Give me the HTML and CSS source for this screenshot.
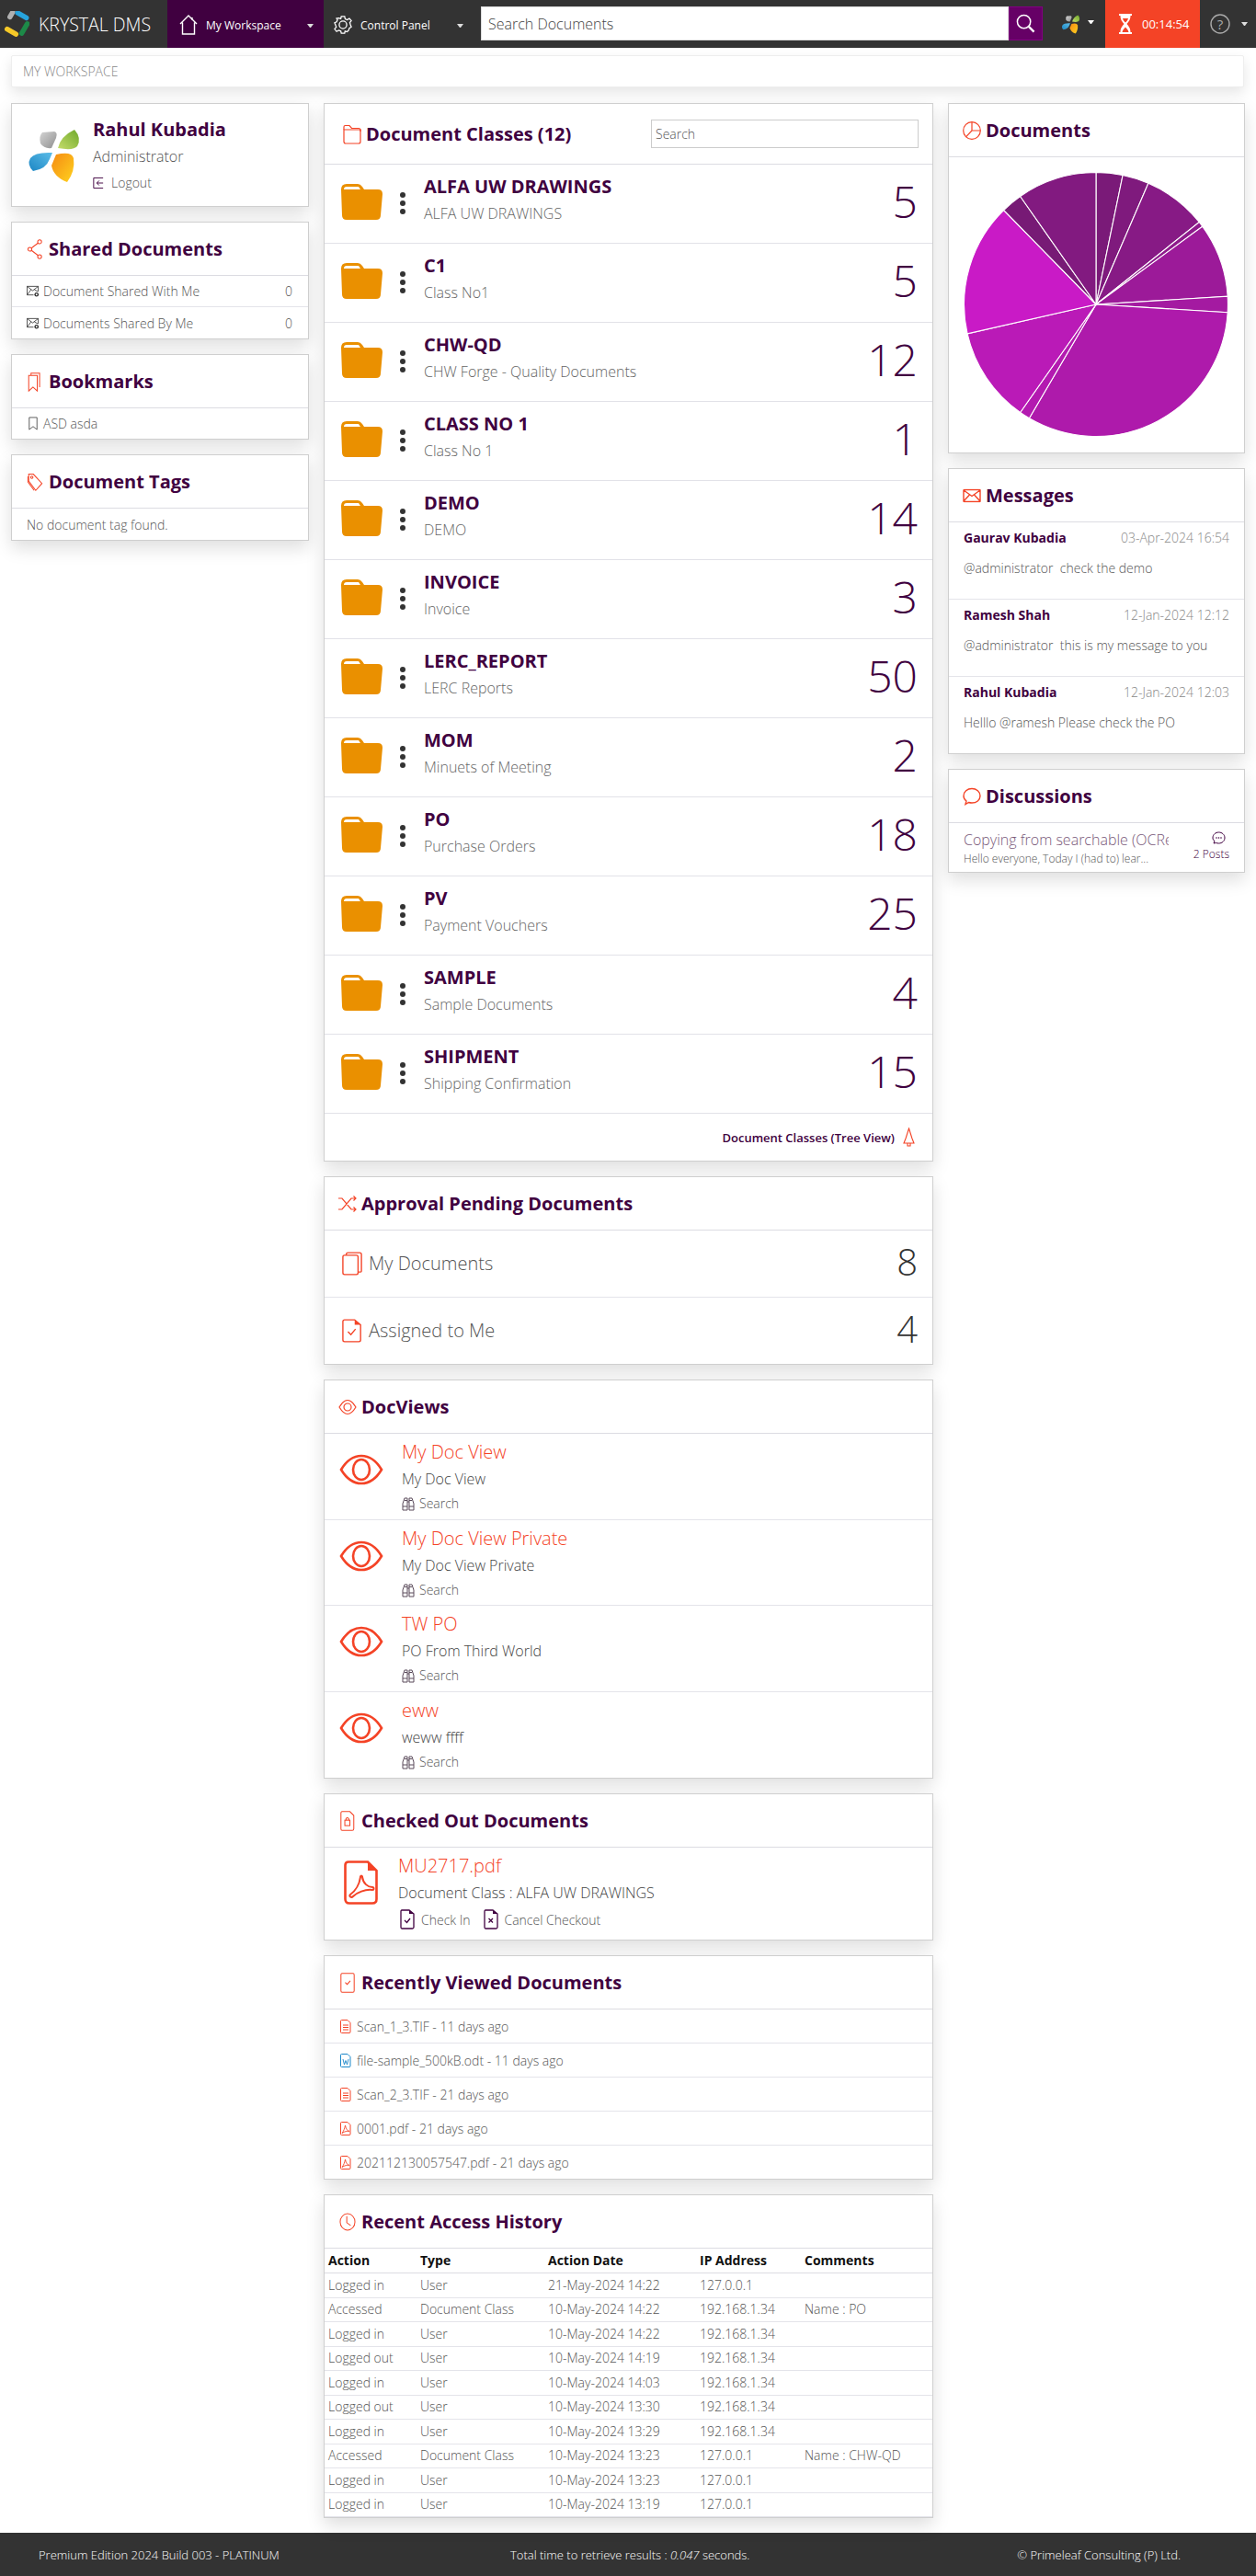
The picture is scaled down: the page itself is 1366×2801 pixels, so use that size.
FILE: index.html
```html
<!DOCTYPE html>
<html lang="en">
<head>
  <meta charset="UTF-8" />
  <title>KRYSTAL DMS - My Workspace</title>
  <link rel="stylesheet" href="styles.css">
</head>
<body>

  <!-- icon sprite -->
  <svg class="sprite" aria-hidden="true">
    <defs>
      <linearGradient id="petal-grey" x1="0" y1="0" x2="1" y2="1"><stop offset="0" stop-color="#d4d4d4"/><stop offset="1" stop-color="#8f8f8f"/></linearGradient>
      <linearGradient id="petal-green" x1="1" y1="0" x2="0" y2="1"><stop offset="0" stop-color="#6fa92c"/><stop offset="1" stop-color="#c5dc6a"/></linearGradient>
      <linearGradient id="petal-blue" x1="1" y1="0" x2="0" y2="1"><stop offset="0" stop-color="#5cbde8"/><stop offset="1" stop-color="#1c86c4"/></linearGradient>
      <linearGradient id="petal-orange" x1="0" y1="0" x2="1" y2="1"><stop offset="0" stop-color="#f58a12"/><stop offset="1" stop-color="#ffd21f"/></linearGradient>
    </defs>
    <symbol id="i-petals" viewBox="0 0 68 64">
      <path fill="url(#petal-grey)" d="M20 8 33 7Q37 8 35 14L30 25Q22 26 18 20 16 12 20 8Z"/>
      <path fill="url(#petal-green)" d="M37 25Q40 12 55 5 63 14 58 23 54 28 37 25Z"/>
      <path fill="url(#petal-blue)" d="M31 30 28 37Q24 48 10 50 3 43 7 36 12 29 31 30Z"/>
      <path fill="url(#petal-orange)" d="M35 32Q52 28 54 36 56 50 47 62 32 56 30 44Z"/>
    </symbol>
    <symbol id="i-folder" viewBox="0 0 46 39">
      <path fill="#ea9000" d="M1 6Q1 0 7 0H19Q22 0 24 3L26 6H41Q46 6 46 11L44 34Q44 39 39 39H7Q2 39 2 34Z"/>
      <path fill="#fff" d="M4 6Q4 3 7 3H20L22 6Z"/>
    </symbol>
    <symbol id="i-eye" viewBox="0 0 48 34">
      <path fill="none" stroke="#f44326" stroke-width="2.6" d="M2 17C8 7 15 2 24 2S40 7 46 17C40 27 33 32 24 32S8 27 2 17Z"/>
      <ellipse cx="24" cy="17" rx="9" ry="11" fill="none" stroke="#f44326" stroke-width="2.6"/>
    </symbol>
    <symbol id="i-binoculars" viewBox="0 0 14 16">
      <path fill="none" stroke="#5a4a5a" stroke-width="1" d="M1 15V8L3 2H6V15ZM13 15V8L11 2H8V15ZM1 11H6M8 11H13M6 6H8M3 4.500H6M8 4.500H11"/>
    </symbol>
    <symbol id="i-sheet" viewBox="0 0 12 15">
      <path fill="none" stroke="#f44326" stroke-width="1" d="M1.500.500H8L11 3.500V13.500Q11 14.500 10 14.500H1.500Q.500 14.500.500 13.500V1.500Q.500.500 1.500.500Z"/>
      <path fill="none" stroke="#f44326" stroke-width="1" d="M3 6H9M3 8.500H9M3 11H9"/>
    </symbol>
    <symbol id="i-word" viewBox="0 0 12 15">
      <path fill="none" stroke="#1b87c9" stroke-width="1" d="M1.500.500H8L11 3.500V13.500Q11 14.500 10 14.500H1.500Q.500 14.500.500 13.500V1.500Q.500.500 1.500.500Z"/>
      <path fill="none" stroke="#1b87c9" stroke-width=".9" d="M3 6 4.500 12 6 7.500 7.500 12 9 6"/>
    </symbol>
    <symbol id="i-pdf" viewBox="0 0 12 15">
      <path fill="none" stroke="#f44326" stroke-width="1" d="M1.500.500H8L11 3.500V13.500Q11 14.500 10 14.500H1.500Q.500 14.500.500 13.500V1.500Q.500.500 1.500.500Z"/>
      <path fill="none" stroke="#f44326" stroke-width=".9" d="M5.500 4C4.800 7 4 10 2 12.500M5.500 4C6 7 7.500 10 10 10.500 8 9.800 5 10.500 2 12.500"/>
    </symbol>
    <symbol id="i-mail" viewBox="0 0 20 15">
      <path fill="none" stroke="#f44326" stroke-width="1.400" d="M1.500 1H18.500Q19 1 19 1.500V13.500Q19 14 18.500 14H1.500Q1 14 1 13.500V1.500Q1 1 1.500 1ZM1 1.500 10 8 19 1.500M1 13.500 7.500 6.500M19 13.500 12.500 6.500"/>
    </symbol>
    <symbol id="i-mail-key" viewBox="0 0 15 15">
      <path fill="none" stroke="#333" stroke-width=".9" d="M.500 2H13.500V8M8 12H.500V2L7 7 13.500 2M.500 12 5 6M13 8 9 6"/>
      <circle cx="11.500" cy="11.500" r="2.500" fill="#333"/><circle cx="11.500" cy="11.500" r="1" fill="#fff"/>
    </symbol>
    <symbol id="i-doc-check" viewBox="0 0 16 22">
      <path fill="none" stroke="#400040" stroke-width="1.300" d="M2 1H10L15 5V19.500Q15 21 13.500 21H2Q1 21 1 19.500V2.500Q1 1 2 1Z"/>
      <path fill="#400040" d="M10 1 15 5H10Z"/>
      <path fill="none" stroke="#400040" stroke-width="1.300" d="M5 12 7.500 14.500 11 10"/>
    </symbol>
    <symbol id="i-doc-cross" viewBox="0 0 16 22">
      <path fill="none" stroke="#400040" stroke-width="1.300" d="M2 1H10L15 5V19.500Q15 21 13.500 21H2Q1 21 1 19.500V2.500Q1 1 2 1Z"/>
      <path fill="#400040" d="M10 1 15 5H10Z"/>
      <path fill="none" stroke="#400040" stroke-width="1.300" d="M5.500 10 10 14.500M10 10 5.500 14.500"/>
    </symbol>
  </svg>

  <!-- Top bar -->
  <header class="topbar">
    <div class="brand">
      <svg class="brand-logo" viewBox="0 0 28 28">
        <g transform="rotate(30 14 14)" fill="none" stroke-width="5.500" stroke-linecap="round">
          <path stroke="#b0b0b0" d="M4 11V5"/>
          <path stroke="#27a3dc" d="M9 3H20"/>
          <path stroke="#1d8a48" d="M24 8V20"/>
          <path stroke="#f6c928" d="M8 24H19"/>
        </g>
      </svg>
      <span>KRYSTAL DMS</span>
    </div>
    <a class="nav-item nav-active">
      <svg class="nav-icon" viewBox="0 0 20 22"><path fill="none" stroke="#fff" stroke-width="1.400" d="M1 10 10 1 19 10M3.500 8.500V21H16.500V8.500M14 3V6"/></svg>
      <span class="nav-label">My Workspace</span><span class="caret"></span>
    </a>
    <a class="nav-item nav-control">
      <svg class="nav-icon" viewBox="0 0 22 22"><path fill="none" stroke="#fff" stroke-width="1.400" d="M9 1H13L13.600 4 16 5 18.600 3.400 21 6 19.200 8.400 20 11 21 13.500 18.600 15 17.800 17.500 16 19.300 13.500 18.500 13 21H9L8.400 18.500 6 17.500 3.400 19 1 16 3 13.500 2 11 1 8.500 3.400 7.500 4.400 5 3.400 3.400 6 3 8.400 3.800Z"/><circle cx="11" cy="11" r="4.500" fill="none" stroke="#fff" stroke-width="1.400"/></svg>
      <span class="nav-label">Control Panel</span><span class="caret"></span>
    </a>
    <div class="top-search">
      <input class="top-search-input" type="text" placeholder="Search Documents" />
      <button class="top-search-btn" type="button">
        <svg viewBox="0 0 22 22" width="21" height="21"><circle cx="9" cy="9" r="7.500" fill="none" stroke="#fff" stroke-width="1.600"/><path stroke="#fff" stroke-width="2.400" d="M14.500 14.500 20.500 20.500"/></svg>
      </button>
    </div>
    <div class="top-user">
      <svg class="top-petals"><use href="#i-petals"/></svg><span class="caret caret-raised"></span>
    </div>
    <div class="timer">
      <svg viewBox="0 0 16 24" width="16" height="24"><path fill="#fff" d="M1 1H15V3H13.500C13.500 8 11 10 9.500 12 11 14 13.500 16 13.500 21H15V23H1V21H2.500C2.500 16 5 14 6.500 12 5 10 2.500 8 2.500 3H1ZM5 6H11C10.500 8 9 9.500 8 10.500 7 9.500 5.500 8 5 6ZM4.500 21H11.500C11 18.500 9.500 17 8 15.500 6.500 17 5 18.500 4.500 21Z" fill-rule="evenodd"/></svg>
      <span>00:14:54</span>
    </div>
    <div class="top-help">
      <svg viewBox="0 0 22 22" width="22" height="22"><circle cx="11" cy="11" r="10" fill="none" stroke="#aaa" stroke-width="1.400"/><text x="11" y="16.500" text-anchor="middle" class="help-mark">?</text></svg>
      <span class="caret"></span>
    </div>
  </header>

  <div class="crumb">MY WORKSPACE</div>

  <main class="columns">

    <!-- Left column -->
    <section class="col-left">
      <div class="card user-card">
        <svg class="user-logo"><use href="#i-petals"/></svg>
        <div class="user-info">
          <div class="user-name">Rahul Kubadia</div>
          <div class="user-role">Administrator</div>
          <a class="user-logout">
            <svg viewBox="0 0 14 15" width="12" height="14"><path fill="none" stroke="#400040" stroke-width="1.100" d="M13 1H1V14H13M13 7.500H5M8 4.500 5 7.500 8 10.500"/></svg>
            Logout
          </a>
        </div>
      </div>

      <div class="card">
        <h2 class="card-head">
          <svg class="head-icon" viewBox="0 0 20 26"><g fill="none" stroke="#f44326" stroke-width="1.200"><circle cx="3.500" cy="13" r="2.500"/><circle cx="16" cy="3.500" r="2.500"/><circle cx="16" cy="22.500" r="2.500"/><path d="M5.500 11.500 14 5M5.500 14.500 14 21"/></g></svg>
          Shared Documents
        </h2>
        <div class="list-row"><svg class="row-icon"><use href="#i-mail-key"/></svg><span class="row-text">Document Shared With Me</span><span class="row-count">0</span></div>
        <div class="list-row"><svg class="row-icon"><use href="#i-mail-key"/></svg><span class="row-text">Documents Shared By Me</span><span class="row-count">0</span></div>
      </div>

      <div class="card">
        <h2 class="card-head">
          <svg class="head-icon" viewBox="0 0 20 26"><path fill="none" stroke="#f44326" stroke-width="1.200" d="M2 5H13V25L7.500 20 2 25ZM5 5V2H16V20"/></svg>
          Bookmarks
        </h2>
        <div class="list-row row-short"><svg class="row-icon" viewBox="0 0 12 16"><path fill="none" stroke="#555" d="M1.500 1H10.500V15L6 11.500 1.500 15Z"/></svg><span class="row-text">ASD asda</span></div>
      </div>

      <div class="card">
        <h2 class="card-head">
          <svg class="head-icon" viewBox="0 0 20 26"><g fill="none" stroke="#f44326" stroke-width="1.200"><path d="M2 3H8L19 15 11 24 2 12Z"/><circle cx="6" cy="7" r="1.500"/><path d="M1 6V13L9 24"/></g></svg>
          Document Tags
        </h2>
        <div class="list-row"><span class="row-text">No document tag found.</span></div>
      </div>
    </section>

    <!-- Center column -->
    <section class="col-center">
      <div class="card">
        <div class="card-head head-classes">
          <h2 class="head-title">
            <svg class="head-icon" viewBox="0 0 20 22"><g fill="none" stroke="#f44326" stroke-width="1.200"><path d="M1 6V3Q1 1.500 2.500 1.500H7L9.500 4.500H17Q19 4.500 19 6.500V8"/><path d="M1 6H19V19Q19 21 17 21H3Q1 21 1 19Z"/></g></svg>
            Document Classes (12)
          </h2>
          <input class="class-search" type="text" placeholder="Search" />
        </div>

        <div class="class-row">
          <svg class="folder"><use href="#i-folder"/></svg><span class="kebab"></span>
          <div class="class-text"><div class="class-name">ALFA UW DRAWINGS</div><div class="class-desc">ALFA UW DRAWINGS</div></div>
          <div class="class-count">5</div>
        </div>
        <div class="class-row">
          <svg class="folder"><use href="#i-folder"/></svg><span class="kebab"></span>
          <div class="class-text"><div class="class-name">C1</div><div class="class-desc">Class No1</div></div>
          <div class="class-count">5</div>
        </div>
        <div class="class-row">
          <svg class="folder"><use href="#i-folder"/></svg><span class="kebab"></span>
          <div class="class-text"><div class="class-name">CHW-QD</div><div class="class-desc">CHW Forge - Quality Documents</div></div>
          <div class="class-count">12</div>
        </div>
        <div class="class-row">
          <svg class="folder"><use href="#i-folder"/></svg><span class="kebab"></span>
          <div class="class-text"><div class="class-name">CLASS NO 1</div><div class="class-desc">Class No 1</div></div>
          <div class="class-count">1</div>
        </div>
        <div class="class-row">
          <svg class="folder"><use href="#i-folder"/></svg><span class="kebab"></span>
          <div class="class-text"><div class="class-name">DEMO</div><div class="class-desc">DEMO</div></div>
          <div class="class-count">14</div>
        </div>
        <div class="class-row">
          <svg class="folder"><use href="#i-folder"/></svg><span class="kebab"></span>
          <div class="class-text"><div class="class-name">INVOICE</div><div class="class-desc">Invoice</div></div>
          <div class="class-count">3</div>
        </div>
        <div class="class-row">
          <svg class="folder"><use href="#i-folder"/></svg><span class="kebab"></span>
          <div class="class-text"><div class="class-name">LERC_REPORT</div><div class="class-desc">LERC Reports</div></div>
          <div class="class-count">50</div>
        </div>
        <div class="class-row">
          <svg class="folder"><use href="#i-folder"/></svg><span class="kebab"></span>
          <div class="class-text"><div class="class-name">MOM</div><div class="class-desc">Minuets of Meeting</div></div>
          <div class="class-count">2</div>
        </div>
        <div class="class-row">
          <svg class="folder"><use href="#i-folder"/></svg><span class="kebab"></span>
          <div class="class-text"><div class="class-name">PO</div><div class="class-desc">Purchase Orders</div></div>
          <div class="class-count">18</div>
        </div>
        <div class="class-row">
          <svg class="folder"><use href="#i-folder"/></svg><span class="kebab"></span>
          <div class="class-text"><div class="class-name">PV</div><div class="class-desc">Payment Vouchers</div></div>
          <div class="class-count">25</div>
        </div>
        <div class="class-row">
          <svg class="folder"><use href="#i-folder"/></svg><span class="kebab"></span>
          <div class="class-text"><div class="class-name">SAMPLE</div><div class="class-desc">Sample Documents</div></div>
          <div class="class-count">4</div>
        </div>
        <div class="class-row">
          <svg class="folder"><use href="#i-folder"/></svg><span class="kebab"></span>
          <div class="class-text"><div class="class-name">SHIPMENT</div><div class="class-desc">Shipping Confirmation</div></div>
          <div class="class-count">15</div>
        </div>

        <div class="tree-link">
          <span>Document Classes (Tree View)</span>
          <svg viewBox="0 0 13 22" width="13" height="22"><path fill="none" stroke="#f44326" stroke-width="1.100" d="M6.500 1 10 12 12 17H1L3 12ZM5 17V20H8V17"/></svg>
        </div>
      </div>

      <div class="card">
        <h2 class="card-head">
          <svg class="head-icon" viewBox="0 0 20 20"><path fill="none" stroke="#f44326" stroke-width="1.200" d="M0 4H4L14 16H19M0 16H4L14 4H19M16.500 1.500 19 4 16.500 6.500M16.500 13.500 19 16 16.500 18.500"/></svg>
          Approval Pending Documents
        </h2>
        <div class="pending-row">
          <svg class="pending-icon" viewBox="0 0 24 28"><g fill="none" stroke="#f44326" stroke-width="1.500"><rect x="1" y="4" width="18" height="23" rx="2"/><path d="M5 4V3Q5 1 7 1H21Q23 1 23 3V23Q23 24 21 24H19"/></g></svg>
          <span class="pending-text">My Documents</span><span class="pending-count">8</span>
        </div>
        <div class="pending-row">
          <svg class="pending-icon" viewBox="0 0 24 28"><g fill="none" stroke="#f44326" stroke-width="1.500"><path d="M3 1H15L22 7V25Q22 27 20 27H3Q1 27 1 25V3Q1 1 3 1Z"/><path d="M7 15 10.500 18.500 16 12"/></g><path fill="#f44326" d="M15 1 22 7H15Z"/></svg>
          <span class="pending-text">Assigned to Me</span><span class="pending-count">4</span>
        </div>
      </div>

      <div class="card">
        <h2 class="card-head">
          <svg class="head-icon" viewBox="0 0 20 18"><g fill="none" stroke="#f44326" stroke-width="1.200"><path d="M1 9C4 4 7 1.500 10 1.500S16 4 19 9C16 14 13 16.500 10 16.500S4 14 1 9Z"/><circle cx="10" cy="9" r="4"/></g></svg>
          DocViews
        </h2>
        <div class="view-row">
          <svg class="view-eye"><use href="#i-eye"/></svg>
          <div class="view-text"><div class="view-title">My Doc View</div><div class="view-desc">My Doc View</div><div class="view-link"><svg class="mini-icon"><use href="#i-binoculars"/></svg>Search</div></div>
        </div>
        <div class="view-row view-row-short">
          <svg class="view-eye"><use href="#i-eye"/></svg>
          <div class="view-text"><div class="view-title">My Doc View Private</div><div class="view-desc">My Doc View Private</div><div class="view-link"><svg class="mini-icon"><use href="#i-binoculars"/></svg>Search</div></div>
        </div>
        <div class="view-row">
          <svg class="view-eye"><use href="#i-eye"/></svg>
          <div class="view-text"><div class="view-title">TW PO</div><div class="view-desc">PO From Third World</div><div class="view-link"><svg class="mini-icon"><use href="#i-binoculars"/></svg>Search</div></div>
        </div>
        <div class="view-row">
          <svg class="view-eye"><use href="#i-eye"/></svg>
          <div class="view-text"><div class="view-title">eww</div><div class="view-desc">weww ffff</div><div class="view-link"><svg class="mini-icon"><use href="#i-binoculars"/></svg>Search</div></div>
        </div>
      </div>

      <div class="card">
        <h2 class="card-head">
          <svg class="head-icon" viewBox="0 0 20 26"><g fill="none" stroke="#f44326" stroke-width="1.200"><path d="M3 1H13L18 6V23Q18 25 16 25H3Q1.500 25 1.500 23V3Q1.500 1 3 1Z"/><rect x="6.500" y="12" width="6.500" height="7"/><path d="M8 12V10Q9.700 7.500 11.500 10V12"/></g></svg>
          Checked Out Documents
        </h2>
        <div class="checked-row">
          <svg class="checked-pdf" viewBox="0 0 37 48"><g fill="none" stroke="#f44326"><path stroke-width="2.600" d="M5 1.500H26L35.500 11V42Q35.500 46.500 31 46.500H6Q1.500 46.500 1.500 42V5Q1.500 1.500 5 1.500Z"/><path stroke-width="2" d="M18 18C17 25 13 33 7 37 5 39 8 41 10 39 14 35 23 31 31 32 33 32 33 29 31 29 26 29 21 25 20 18 20 16 18 16 18 18Z"/></g><path fill="#f44326" d="M26 1.500 35.500 11H26Z"/></svg>
          <div class="checked-text">
            <div class="view-title">MU2717.pdf</div>
            <div class="view-desc">Document Class : ALFA UW DRAWINGS</div>
            <div class="checked-actions">
              <span class="checked-action"><svg class="action-icon"><use href="#i-doc-check"/></svg>Check In</span>
              <span class="checked-action"><svg class="action-icon"><use href="#i-doc-cross"/></svg>Cancel Checkout</span>
            </div>
          </div>
        </div>
      </div>

      <div class="card">
        <h2 class="card-head">
          <svg class="head-icon" viewBox="0 0 20 26"><g fill="none" stroke="#f44326" stroke-width="1.200"><path d="M3 1H17Q18.500 1 18.500 3V23Q18.500 25 17 25H3Q1.500 25 1.500 23V3Q1.500 1 3 1Z"/><path d="M7 12.500 9.500 15 13.500 10.500"/></g></svg>
          Recently Viewed Documents
        </h2>
        <div class="recent-row"><svg class="recent-icon"><use href="#i-sheet"/></svg>Scan_1_3.TIF - 11 days ago</div>
        <div class="recent-row"><svg class="recent-icon"><use href="#i-word"/></svg>file-sample_500kB.odt - 11 days ago</div>
        <div class="recent-row"><svg class="recent-icon"><use href="#i-sheet"/></svg>Scan_2_3.TIF - 21 days ago</div>
        <div class="recent-row"><svg class="recent-icon"><use href="#i-pdf"/></svg>0001.pdf - 21 days ago</div>
        <div class="recent-row"><svg class="recent-icon"><use href="#i-pdf"/></svg>202112130057547.pdf - 21 days ago</div>
      </div>

      <div class="card">
        <h2 class="card-head">
          <svg class="head-icon" viewBox="0 0 20 26"><g fill="none" stroke="#f44326" stroke-width="1.200"><ellipse cx="10" cy="13" rx="9.500" ry="10.500"/><path d="M9 5.500V14L14 17.500"/></g></svg>
          Recent Access History
        </h2>
        <table class="access-table">
          <thead>
            <tr><th class="c-action">Action</th><th class="c-type">Type</th><th class="c-date">Action Date</th><th class="c-ip">IP Address</th><th>Comments</th></tr>
          </thead>
          <tbody>
            <tr><td>Logged in</td><td>User</td><td>21-May-2024 14:22</td><td>127.0.0.1</td><td></td></tr>
            <tr><td>Accessed</td><td>Document Class</td><td>10-May-2024 14:22</td><td>192.168.1.34</td><td>Name : PO</td></tr>
            <tr><td>Logged in</td><td>User</td><td>10-May-2024 14:22</td><td>192.168.1.34</td><td></td></tr>
            <tr><td>Logged out</td><td>User</td><td>10-May-2024 14:19</td><td>192.168.1.34</td><td></td></tr>
            <tr><td>Logged in</td><td>User</td><td>10-May-2024 14:03</td><td>192.168.1.34</td><td></td></tr>
            <tr><td>Logged out</td><td>User</td><td>10-May-2024 13:30</td><td>192.168.1.34</td><td></td></tr>
            <tr><td>Logged in</td><td>User</td><td>10-May-2024 13:29</td><td>192.168.1.34</td><td></td></tr>
            <tr><td>Accessed</td><td>Document Class</td><td>10-May-2024 13:23</td><td>127.0.0.1</td><td>Name : CHW-QD</td></tr>
            <tr><td>Logged in</td><td>User</td><td>10-May-2024 13:23</td><td>127.0.0.1</td><td></td></tr>
            <tr><td>Logged in</td><td>User</td><td>10-May-2024 13:19</td><td>127.0.0.1</td><td></td></tr>
          </tbody>
        </table>
      </div>
    </section>

    <!-- Right column -->
    <section class="col-right">
      <div class="card">
        <h2 class="card-head">
          <svg class="head-icon" viewBox="0 0 20 20"><g fill="none" stroke="#f44326" stroke-width="1.200"><circle cx="10" cy="10" r="9.300"/><path d="M10 .700V10H19.300M10 10 3.500 16.800"/></g></svg>
          Documents
        </h2>
        <div class="pie-wrap">
          <svg class="pie" viewBox="-145 -145 290 290" width="290" height="290">
            <g stroke="#fff" stroke-width="1.100">
              <path fill="#7a1a78" d="M0 0V-143.500A143.500 143.500 0 0 1 29.100 -140.500Z"/>
              <path fill="#7f1a7d" d="M0 0L29.100 -140.500A143.500 143.500 0 0 1 56.900 -131.700Z"/>
              <path fill="#871a85" d="M0 0L56.900 -131.700A143.500 143.500 0 0 1 112.200 -89.500Z"/>
              <path fill="#8e1a8c" d="M0 0L112.200 -89.500A143.500 143.500 0 0 1 115.700 -84.800Z"/>
              <path fill="#9c1a99" d="M0 0L115.700 -84.800A143.500 143.500 0 0 1 143.200 -8.800Z"/>
              <path fill="#a41aa1" d="M0 0L143.200 -8.800A143.500 143.500 0 0 1 143.200 8.800Z"/>
              <path fill="#ae1aab" d="M0 0L143.200 8.800A143.500 143.500 0 0 1 -72.600 123.800Z"/>
              <path fill="#b31ab0" d="M0 0L-72.600 123.800A143.500 143.500 0 0 1 -82.400 117.500Z"/>
              <path fill="#ba1ab7" d="M0 0L-82.400 117.500A143.500 143.500 0 0 1 -139.900 31.900Z"/>
              <path fill="#c91ac6" d="M0 0L-139.900 31.900A143.500 143.500 0 0 1 -100.400 -102.500Z"/>
              <path fill="#771a75" d="M0 0L-100.400 -102.500A143.500 143.500 0 0 1 -82.400 -117.500Z"/>
              <path fill="#821a80" d="M0 0L-82.400 -117.500A143.500 143.500 0 0 1 0 -143.500Z"/>
            </g>
          </svg>
        </div>
      </div>

      <div class="card">
        <h2 class="card-head">
          <svg class="head-icon" viewBox="0 0 20 15"><use href="#i-mail"/></svg>
          Messages
        </h2>
        <div class="msg-row"><div class="msg-top"><span class="msg-from">Gaurav Kubadia</span><span class="msg-date">03-Apr-2024 16:54</span></div><div class="msg-body">@administrator&nbsp; check the demo</div></div>
        <div class="msg-row"><div class="msg-top"><span class="msg-from">Ramesh Shah</span><span class="msg-date">12-Jan-2024 12:12</span></div><div class="msg-body">@administrator&nbsp; this is my message to you</div></div>
        <div class="msg-row"><div class="msg-top"><span class="msg-from">Rahul Kubadia</span><span class="msg-date">12-Jan-2024 12:03</span></div><div class="msg-body">Helllo @ramesh Please check the PO</div></div>
      </div>

      <div class="card">
        <h2 class="card-head">
          <svg class="head-icon" viewBox="0 0 20 20"><path fill="none" stroke="#f44326" stroke-width="1.400" d="M3 18.500 4 15C2 13.500 1 11.500 1 9.500 1 5 5 1.500 10 1.500S19 5 19 9.500 15 17 10 17C8.500 17 7.500 16.800 6.500 16.500Z"/></svg>
          Discussions
        </h2>
        <div class="disc-row">
          <div class="disc-text">
            <div class="disc-title">Copying from searchable (OCRed) PDF</div>
            <div class="disc-desc">Hello everyone, Today I (had to) lear...</div>
          </div>
          <div class="disc-posts">
            <svg viewBox="0 0 15 14" width="15" height="14"><path fill="none" stroke="#400040" d="M2 13 3 10.500C1.500 9.500 1 8.500 1 7 1 3.500 4 1 7.500 1S14 3.500 14 7 11 13 7.500 13C6.500 13 5.500 12.800 4.500 12.500Z"/><circle cx="5" cy="7" r=".8" fill="#400040"/><circle cx="7.500" cy="7" r=".8" fill="#400040"/><circle cx="10" cy="7" r=".8" fill="#400040"/></svg>
            <span>2 Posts</span>
          </div>
        </div>
      </div>
    </section>
  </main>

  <footer class="footer">
    <div class="footer-left">Premium Edition 2024 Build 003 - PLATINUM</div>
    <div class="footer-mid">Total time to retrieve results : <em>0.047</em> seconds.</div>
    <div>&copy; Primeleaf Consulting (P) Ltd.</div>
  </footer>

</body>
</html>
```

FILE: styles.css
```css
* {
  box-sizing: border-box;
}

body {
  font-family: 'Open Sans', sans-serif;
  font-weight: 300;
  background: #fff;
  color: #555;
  margin: 0;
  padding: 0;
}

.sprite {
  display: block;
  width: 0;
  height: 0;
}

/* top bar */
.topbar {
  display: flex;
  align-items: stretch;
  height: 52px;
  background: #333;
  color: #fff;
}

.brand {
  display: flex;
  align-items: center;
  width: 182px;
  padding-left: 4px;
  font-size: 19.500px;
}

.brand-logo {
  width: 28px;
  height: 28px;
  margin-right: 10px;
}

.nav-item {
  display: flex;
  align-items: center;
  position: relative;
  font-size: 12px;
  font-weight: 400;
  padding-top: 2px;
}

.nav-active {
  width: 170px;
  background: #400040;
  padding-left: 13px;
}

.nav-control {
  width: 171px;
  padding-left: 11px;
}

.nav-icon {
  width: 20px;
  height: 22px;
  margin-right: 9px;
}

.caret {
  display: block;
  flex: none;
  width: 7px;
  height: 4px;
  border-top: 4px solid #ddd;
  border-left: 3.500px solid transparent;
  border-right: 3.500px solid transparent;
}

.nav-active .caret {
  position: absolute;
  right: 11px;
  top: 26px;
}

.nav-control .caret {
  position: absolute;
  right: 19px;
  top: 26px;
}

.caret-raised {
  margin: -4px 0 0 6px;
  border-top-color: #fff;
}

.top-search {
  display: flex;
  margin-top: 7px;
  height: 37px;
  width: 611px;
}

.top-search-input {
  flex: 1;
  border: 1px solid #ddd;
  padding: 0 7px;
  font-family: 'Open Sans', sans-serif;
  font-weight: 300;
  font-size: 16px;
  color: #333;
  background: #fff;
}

.top-search-input::placeholder {
  color: #444;
  opacity: 1;
}

.top-search-btn {
  width: 37px;
  background: #660066;
  border: 1px solid #800080;
  padding: 0;
  display: flex;
  align-items: center;
  justify-content: center;
}

.top-user {
  display: flex;
  align-items: center;
  width: 68px;
  padding-left: 19px;
}

.top-petals {
  width: 24px;
  height: 24px;
}

.timer {
  display: flex;
  align-items: center;
  width: 103px;
  padding-left: 14px;
  gap: 10px;
  background: #f44326;
  font-size: 13px;
  font-weight: 400;
}

.top-help {
  display: flex;
  align-items: center;
  flex: 1;
  padding-left: 11px;
  gap: 12px;
}

.help-mark {
  font-size: 15px;
  font-weight: 400;
  fill: #aaa;
}

/* breadcrumb */
.crumb {
  margin: 8px 13px 0 12px;
  height: 35px;
  padding: 0 12px;
  line-height: 34px;
  font-size: 14px;
  color: #888;
  background: #fff;
  border: 1px solid #eee;
  border-radius: 2px;
  box-shadow: 0 6px 14px rgba(0, 0, 0, .1);
}

/* columns */
.columns {
  display: flex;
  align-items: flex-start;
  margin-top: 17px;
  padding-left: 12px;
}

.col-left {
  width: 324px;
}

.col-center {
  width: 663px;
  margin: 0 16px;
}

.col-right {
  width: 323px;
}

.card {
  background: #fff;
  border: 1px solid #cfcfcf;
  box-shadow: 0 8px 18px rgba(0, 0, 0, .13);
  margin-bottom: 16px;
}

.card-head {
  display: flex;
  align-items: center;
  height: 58px;
  margin: 0;
  padding: 0 15px;
  border-bottom: 1px solid #dcdce2;
  font-size: 20px;
  font-weight: 700;
  color: #400040;
}

.head-title {
  display: flex;
  align-items: center;
  margin: 0;
  font-size: 20px;
  font-weight: 700;
  color: #400040;
}

.head-icon {
  width: 20px;
  height: 22px;
  margin-right: 5px;
  flex: none;
}

/* left column */
.user-card {
  display: flex;
  height: 113px;
  padding: 0 0 0 13px;
}

.user-logo {
  width: 68px;
  height: 64px;
  margin-top: 23px;
}

.user-info {
  margin-left: 7px;
  padding-top: 15px;
}

.user-name {
  font-size: 20px;
  font-weight: 700;
  color: #400040;
  line-height: 26px;
}

.user-role {
  font-size: 16px;
  line-height: 20px;
  margin-top: 6px;
}

.user-logout {
  display: flex;
  align-items: center;
  gap: 8px;
  font-size: 14px;
  line-height: 20px;
  margin-top: 9px;
}

.list-row {
  display: flex;
  align-items: center;
  height: 34px;
  padding: 0 17px 0 16px;
  border-bottom: 1px solid #e4e4ea;
  font-size: 14px;
}

.list-row:last-child {
  border-bottom: 0;
}

.row-short {
  height: 33px;
}

.row-icon {
  width: 14px;
  height: 15px;
  margin-right: 4px;
  flex: none;
}

.row-text {
  flex: 1;
}

.row-count {
  font-size: 14px;
}

/* document classes */
.head-classes {
  height: 66px;
  justify-content: space-between;
  padding: 0 15px 0 20px;
}

.class-search {
  width: 291px;
  height: 31px;
  border: 1px solid #ccc;
  padding: 0 4px;
  font-family: 'Open Sans', sans-serif;
  font-weight: 300;
  font-size: 14px;
  background: #fff;
}

.class-search::placeholder {
  color: #555;
  opacity: 1;
}

.class-row {
  display: flex;
  height: 86px;
  padding: 0 16px 0 17px;
  border-bottom: 1px solid #e2e2e8;
}

.folder {
  width: 46px;
  height: 39px;
  margin-top: 21px;
  flex: none;
}

.kebab {
  width: 6px;
  height: 6px;
  margin: 30px 0 0 19px;
  border-radius: 50%;
  background: #333;
  box-shadow: 0 9px 0 #333, 0 18px 0 #333;
  flex: none;
}

.class-text {
  flex: 1;
  margin-left: 20px;
  padding-top: 11px;
}

.class-name {
  font-size: 20px;
  font-weight: 700;
  line-height: 26px;
  color: #400040;
}

.class-desc {
  font-size: 16px;
  line-height: 20px;
  margin-top: 6px;
  color: #666;
}

.class-count {
  font-size: 48px;
  line-height: 80px;
  color: #400040;
}

.tree-link {
  display: flex;
  align-items: center;
  justify-content: flex-end;
  gap: 9px;
  height: 51px;
  padding-right: 19px;
  font-size: 13px;
  font-weight: 600;
  color: #400040;
}

/* approval */
.pending-row {
  display: flex;
  align-items: center;
  height: 73px;
  padding: 0 16px 0 19px;
  border-bottom: 1px solid #e4e4ea;
}

.pending-row:last-child {
  height: 72px;
  border-bottom: 0;
}

.pending-icon {
  width: 22px;
  height: 28px;
  margin-right: 7px;
}

.pending-text {
  flex: 1;
  font-size: 20px;
  margin-top: -2px;
}

.pending-count {
  font-size: 40px;
  line-height: 40px;
  margin-top: -4px;
  color: #333;
}

/* docviews */
.view-row {
  display: flex;
  height: 94px;
  padding-left: 16px;
  border-bottom: 1px solid #e4e4ea;
}

.view-row-short {
  height: 93px;
}

.view-row:last-child {
  height: 93px;
  border-bottom: 0;
}

.view-eye {
  width: 48px;
  height: 34px;
  margin-top: 22px;
  flex: none;
}

.view-text {
  margin-left: 20px;
  padding-top: 7px;
}

.view-title {
  font-size: 20px;
  line-height: 26px;
  color: #f44326;
}

.view-desc {
  font-size: 16px;
  line-height: 20px;
  margin-top: 6px;
  color: #444;
}

.view-link {
  display: flex;
  align-items: center;
  gap: 5px;
  font-size: 14px;
  line-height: 18px;
  margin-top: 8px;
  color: #555;
}

.mini-icon {
  width: 14px;
  height: 16px;
}

/* checked out */
.checked-row {
  display: flex;
  height: 100px;
  padding-left: 21px;
}

.checked-pdf {
  width: 37px;
  height: 48px;
  margin-top: 14px;
  flex: none;
}

.checked-text {
  margin-left: 22px;
  padding-top: 7px;
}

.checked-actions {
  display: flex;
  gap: 14px;
  margin-top: 8px;
  padding-left: 2px;
}

.checked-action {
  display: flex;
  align-items: center;
  gap: 7px;
  font-size: 14px;
}

.action-icon {
  width: 16px;
  height: 22px;
}

/* recent */
.recent-row {
  display: flex;
  align-items: center;
  height: 37px;
  padding-left: 17px;
  border-bottom: 1px solid #e4e4ea;
  font-size: 14px;
}

.recent-row:last-child {
  height: 36px;
  border-bottom: 0;
}

.recent-icon {
  width: 12px;
  height: 15px;
  margin-right: 6px;
}

/* table */
.access-table {
  width: 100%;
  border-collapse: collapse;
  table-layout: fixed;
  font-size: 14px;
}

.access-table th {
  height: 26px;
  padding: 0 4px;
  text-align: left;
  font-weight: 700;
  color: #111;
  border-bottom: 1px solid #dcdce2;
}

.access-table td {
  height: 26px;
  padding: 0 4px;
  line-height: 18px;
  border-bottom: 1px solid #e4e4ea;
}

.access-table tr:nth-child(odd) td {
  height: 27px;
}

.c-action {
  width: 100px;
}

.c-type {
  width: 139px;
}

.c-date {
  width: 165px;
}

.c-ip {
  width: 114px;
}

/* right column */
.pie-wrap {
  height: 321px;
  padding: 15px 0 0 15px;
}

.pie {
  display: block;
}

.msg-row {
  height: 84px;
  padding: 7px 16px;
  border-bottom: 1px solid #e4e4ea;
}

.msg-row:last-child {
  height: 83px;
  border-bottom: 0;
}

.msg-top {
  display: flex;
  justify-content: space-between;
  line-height: 20px;
}

.msg-from {
  font-size: 14px;
  font-weight: 700;
  color: #400040;
}

.msg-date {
  font-size: 14px;
  color: #888;
}

.msg-body {
  font-size: 14px;
  line-height: 20px;
  margin-top: 13px;
}

.disc-row {
  display: flex;
  height: 53px;
  padding: 0 16px;
}

.disc-text {
  width: 223px;
  padding-top: 6px;
}

.disc-title {
  font-size: 16px;
  line-height: 24px;
  color: #7a5a7a;
  white-space: nowrap;
  overflow: hidden;
}

.disc-desc {
  font-size: 12px;
  line-height: 15px;
  margin-top: 1px;
  white-space: nowrap;
}

.disc-posts {
  flex: 1;
  display: flex;
  flex-direction: column;
  align-items: flex-end;
  padding-top: 9px;
  font-size: 12px;
  line-height: 16px;
  color: #400040;
}

.disc-posts svg {
  margin-right: 4px;
  margin-bottom: 3px;
}

/* footer */
.footer {
  display: flex;
  align-items: center;
  height: 48px;
  padding: 0 82px 0 42px;
  background: #333;
  color: #fff;
  font-size: 13px;
}

.footer-left {
  width: 513px;
}

.footer-mid {
  flex: 1;
}
```
